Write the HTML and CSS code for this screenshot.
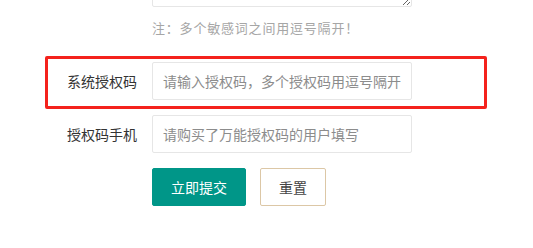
FILE: index.html
```html
<!DOCTYPE html>
<html>
<head>
<meta charset="utf-8">
<link rel="stylesheet" href="styles.css">
</head>
<body>
<div class="form">
  <div class="item item-textarea">
    <div class="field"><textarea class="textarea"></textarea></div>
  </div>
  <div class="item item-aux">
    <div class="field"><div class="aux">注：多个敏感词之间用逗号隔开！</div></div>
  </div>
  <div class="item">
    <label class="label">系统授权码</label>
    <div class="field"><input class="input" type="text" placeholder="请输入授权码，多个授权码用逗号隔开"></div>
  </div>
  <div class="item">
    <label class="label">授权码手机</label>
    <div class="field"><input class="input" type="text" placeholder="请购买了万能授权码的用户填写"></div>
  </div>
  <div class="item">
    <div class="field buttons">
      <button class="btn btn-primary">立即提交</button>
      <button class="btn btn-reset">重置</button>
    </div>
  </div>
  <div class="highlight"></div>
</div>
</body>
</html>
```
FILE: styles.css
```css
html, body {
  margin: 0;
  padding: 0;
  background: #fff;
  font-family: "Noto Sans CJK SC", "Noto Sans", sans-serif;
  font-size: 14px;
  color: #333;
  overflow: hidden;
}
.form {
  display: flow-root;
  position: relative;
  width: 533px;
  height: 248px;
}
.item {
  display: flex;
  align-items: center;
  padding-left: 152px;
  position: relative;
  margin-bottom: 15px;
}
.item-textarea {
  margin-top: -53px;
  margin-bottom: 0;
}
.label {
  position: absolute;
  left: 42px;
  width: 110px;
  box-sizing: border-box;
  padding: 0 15px;
  text-align: right;
  line-height: 20px;
  color: #333;
  font-size: 14px;
}
.field {
  width: 260px;
}
.textarea {
  display: block;
  box-sizing: border-box;
  width: 260px;
  height: 60px;
  border: 1px solid #e6e6e6;
  border-radius: 2px;
  margin: 0;
  resize: both;
}
.aux {
  padding: 11px 0 9px;
  line-height: 20px;
  font-size: 13px;
  color: #a6a6a6;
  white-space: nowrap;
  letter-spacing: 0.8px;
}
.input {
  display: block;
  box-sizing: border-box;
  width: 260px;
  height: 38px;
  border: 1px solid #e6e6e6;
  border-radius: 2px;
  padding: 0 10px;
  font-family: "Noto Sans CJK SC", "Noto Sans", sans-serif;
  font-size: 14px;
  color: #333;
  outline: none;
}
.input::placeholder {
  color: #8c8c8c;
}
.buttons {
  display: flex;
  gap: 14px;
}
.btn {
  box-sizing: border-box;
  height: 38px;
  line-height: 36px;
  padding: 0 18px;
  border-radius: 2px;
  font-family: "Noto Sans CJK SC", "Noto Sans", sans-serif;
  font-size: 14px;
  cursor: pointer;
  white-space: nowrap;
}
.btn-primary {
  background: #009688;
  border: 1px solid #009688;
  color: #fff;
}
.btn-reset {
  background: #fff;
  border: 1px solid #dcc7a6;
  color: #444;
}
.highlight {
  position: absolute;
  left: 45px;
  top: 56px;
  width: 442px;
  height: 53px;
  box-sizing: border-box;
  border: 3px solid #f4221c;
  border-radius: 2px;
  pointer-events: none;
}
```
